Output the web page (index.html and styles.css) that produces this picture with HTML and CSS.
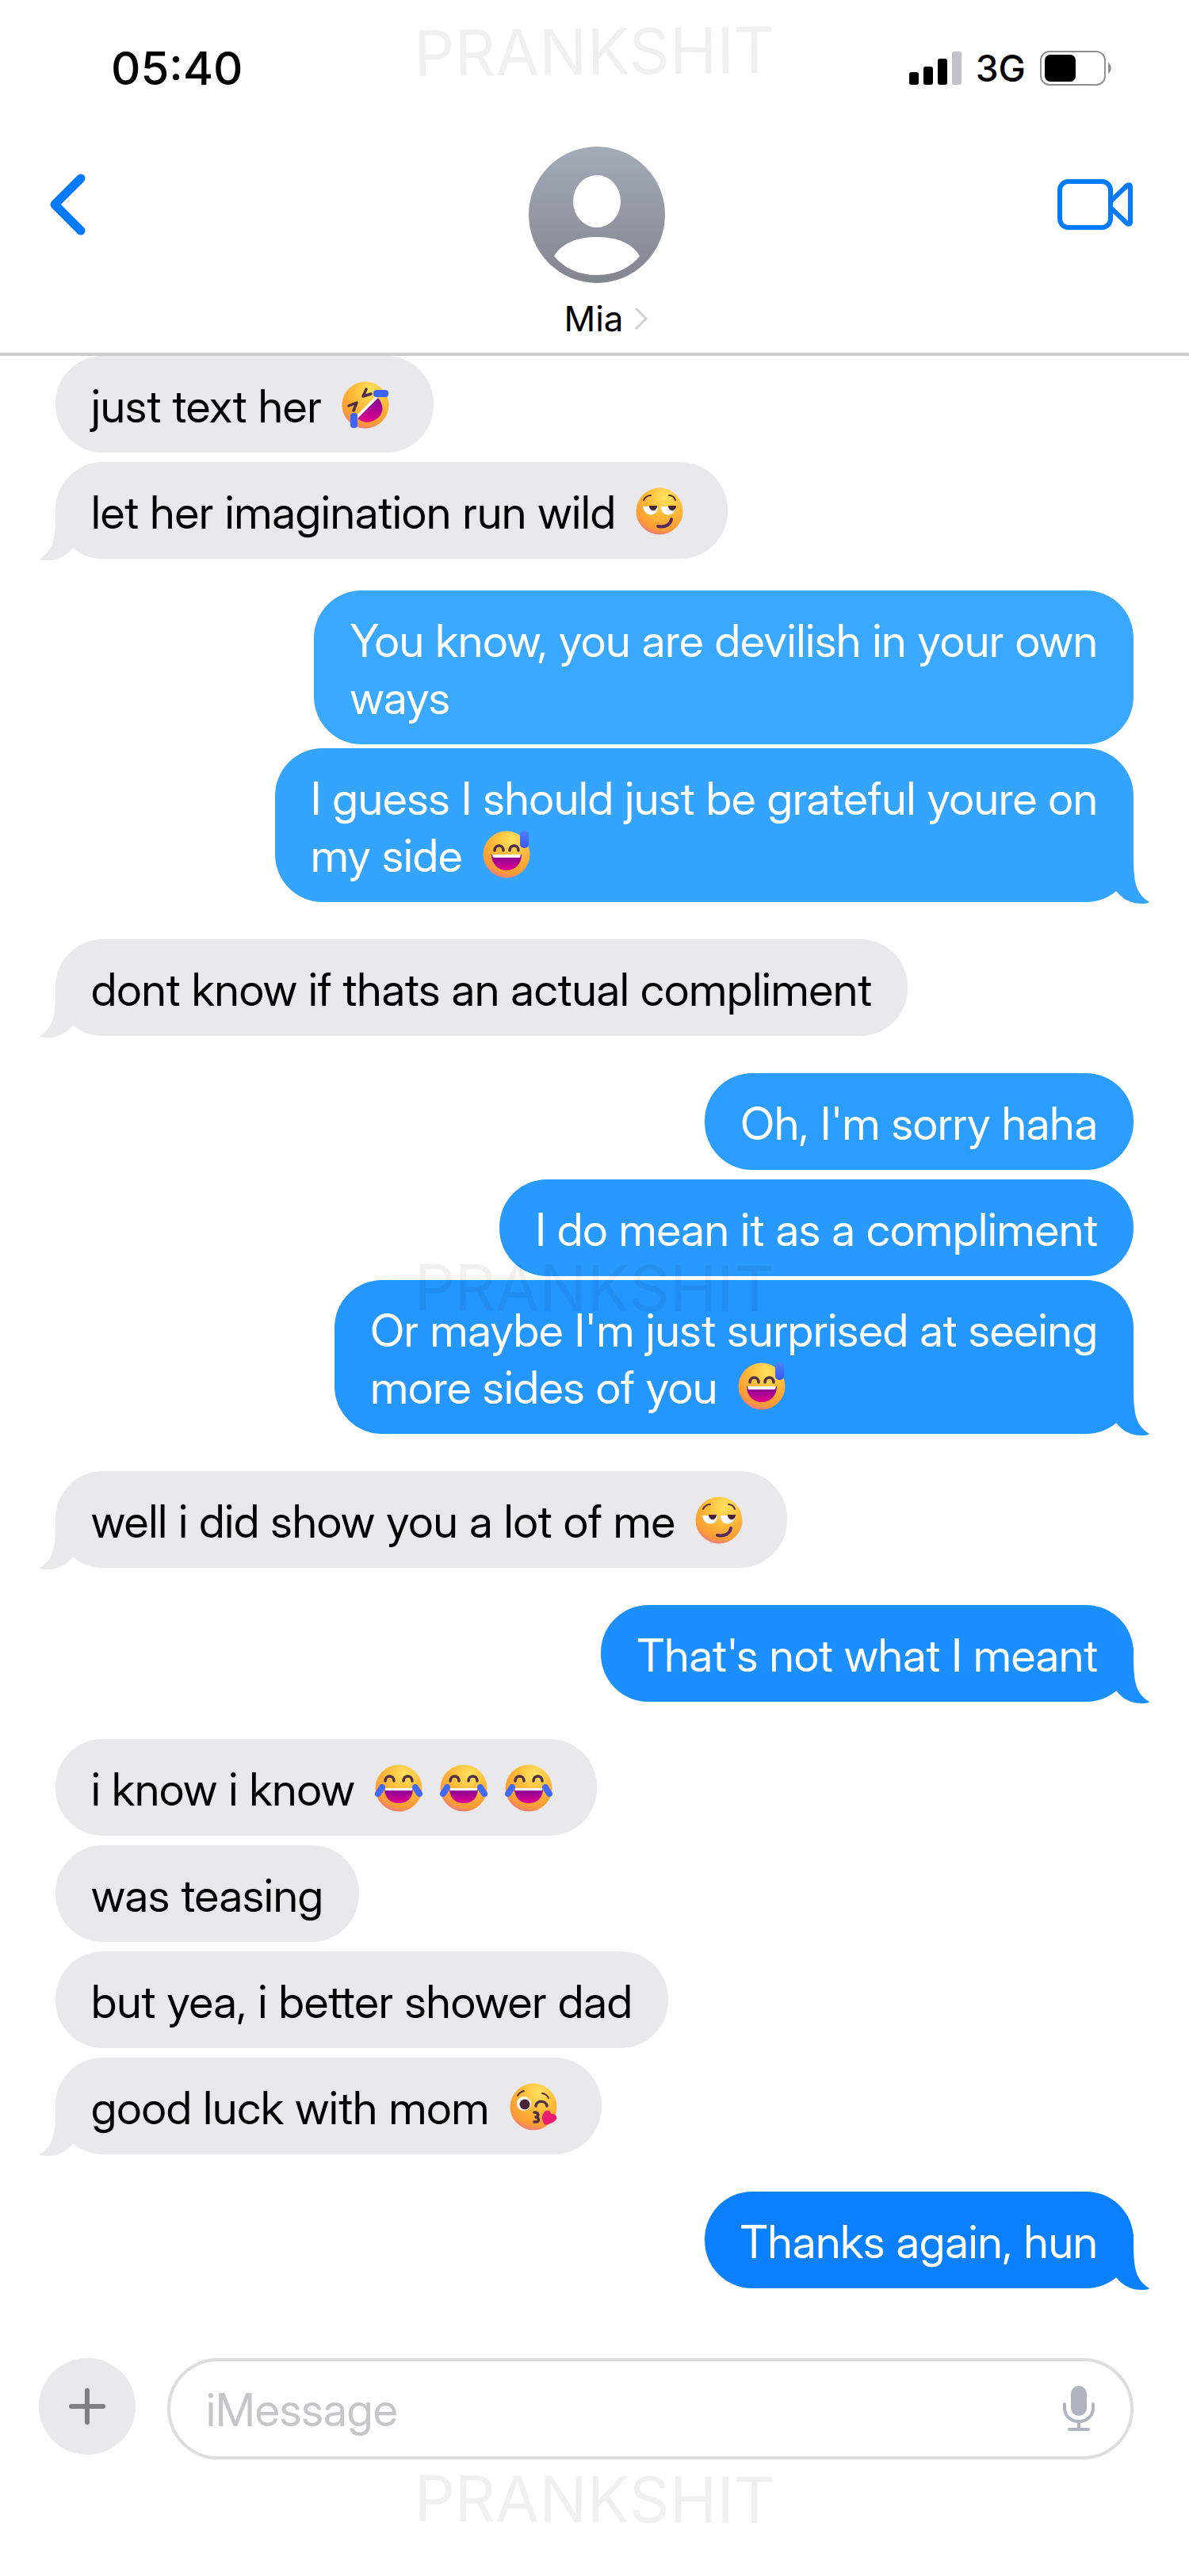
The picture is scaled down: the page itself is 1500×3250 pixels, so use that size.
FILE: index.html
```html
<!DOCTYPE html>
<html lang="en">
<head>
    <meta charset="UTF-8">
    <meta name="viewport" content="width=device-width, initial-scale=1.0">
    <title>Mia - Messages</title>
    <link rel="stylesheet" href="styles.css">
</head>
<body>
    <!-- Shared shapes -->
    <svg class="sprite" aria-hidden="true">
        <defs>
            <radialGradient id="face" cx="0.62" cy="0.2" r="0.9">
                <stop offset="0" stop-color="#ffe25e"/>
                <stop offset="0.45" stop-color="#ffb937"/>
                <stop offset="0.78" stop-color="#fb9b35"/>
                <stop offset="1" stop-color="#ea6aa0"/>
            </radialGradient>
            <linearGradient id="mouth" x1="0" y1="0" x2="0" y2="1">
                <stop offset="0.2" stop-color="#8f0095"/>
                <stop offset="1" stop-color="#e2058c"/>
            </linearGradient>
            <linearGradient id="tear" x1="0" y1="0" x2="0" y2="1">
                <stop offset="0" stop-color="#4d82ff"/>
                <stop offset="1" stop-color="#3a55f0"/>
            </linearGradient>
            <linearGradient id="avatar" x1="0" y1="0" x2="0" y2="1">
                <stop offset="0" stop-color="#a3abb9"/>
                <stop offset="1" stop-color="#83858f"/>
            </linearGradient>
        </defs>
        <symbol id="tail" viewBox="0 0 50 70">
            <path d="M30 0C30 38 30 56 50 68Q49 70 40 70C26 70 16 64 8 54L0 48V0Z" fill="currentColor"/>
        </symbol>
        <symbol id="sweat" viewBox="0 0 60 60">
            <circle cx="30" cy="30" r="29.5" fill="url(#face)"/>
            <path d="M15 25c0-8 11-8 11 0M34 25c0-8 11-8 11 0" fill="none" stroke="#4f2f45" stroke-width="3.5" stroke-linecap="round"/>
            <path d="M11 30h38c0 12-8 20-19 20S11 42 11 30z" fill="url(#mouth)"/>
            <path d="M12 30h36l-1 4H13z" fill="#fff"/>
            <rect x="47" y="0" width="11" height="22" rx="5" fill="url(#tear)"/>
        </symbol>
        <symbol id="joy" viewBox="0 0 60 60">
            <circle cx="30" cy="30" r="29.5" fill="url(#face)"/>
            <path d="M13 21c0-8 11-8 11 0M36 21c0-8 11-8 11 0" fill="none" stroke="#4f2f45" stroke-width="3.5" stroke-linecap="round"/>
            <path d="M12 30h36c0 12-7 19-18 19S12 42 12 30z" fill="url(#mouth)"/>
            <path d="M12 30h36l-1 3H13z" fill="#fff"/>
            <path d="M9 29 4 37M51 29l5 8" stroke="#4169fb" stroke-width="8" stroke-linecap="round"/>
        </symbol>
        <symbol id="rofl" viewBox="0 0 60 60">
            <circle cx="30" cy="30" r="29.5" fill="url(#face)"/>
            <path d="M31 10l-4 9 10-3M9 31l10-4-4 10" fill="none" stroke="#4f2f45" stroke-width="3.5" stroke-linecap="round" stroke-linejoin="round"/>
            <path d="M19 46 45 20c9 10 8 20 1 26s-18 9-27 0z" fill="url(#mouth)"/>
            <path d="M18 44 43 19l3 2-26 26z" fill="#fff"/>
            <rect x="40" y="11" width="19" height="9" rx="4" fill="#3d64ff"/>
            <rect x="11" y="40" width="9" height="19" rx="4" fill="#3d64ff"/>
        </symbol>
        <symbol id="smirk" viewBox="0 0 60 60">
            <circle cx="30" cy="30" r="29.5" fill="url(#face)"/>
            <path d="M10 16q3-6 9-6M42 10q6 0 8 6" fill="none" stroke="#4f2f45" stroke-width="2" stroke-linecap="round"/>
            <path d="M9 24h19c0 14-17 14-19 0zM32 24h19c-2 14-19 14-19 0z" fill="#fff"/>
            <path d="M17 23h10c0 8-10 8-10 0zM41 23h10c0 8-10 8-10 0z" fill="#4a2237"/>
            <path d="M28 49c10 2 16-3 17-9" fill="none" stroke="#552a5c" stroke-width="4" stroke-linecap="round"/>
        </symbol>
        <symbol id="kiss" viewBox="0 0 60 60">
            <circle cx="30" cy="30" r="29.5" fill="url(#face)"/>
            <path d="M10 16q3-5 8-6M41 13q6 1 8 6" fill="none" stroke="#4f2f45" stroke-width="2" stroke-linecap="round"/>
            <circle cx="18" cy="26" r="9" fill="#fff"/>
            <circle cx="19" cy="27" r="6.5" fill="#4a2237"/>
            <path d="M33 29c1-8 13-7 14 0" fill="none" stroke="#4f2f45" stroke-width="3.5" stroke-linecap="round"/>
            <path d="M31 37c6 0 6 5 2 6 5 1 5 7-2 6" fill="none" stroke="#4f2f45" stroke-width="3.5" stroke-linecap="round" stroke-linejoin="round"/>
            <path d="M43 38c2-5 9-4 9 1 8-1 9 6 5 9s-8 4-12 5c-5-5-5-11-2-15z" fill="#ea1d70"/>
        </symbol>
    </svg>

    <header class="header">
        <div class="status-bar">
            <time class="clock">05:40</time>
            <div class="indicators">
                <svg class="signal" viewBox="0 0 66 44" aria-hidden="true">
                    <rect x="0" y="27" width="12" height="16" rx="3"/>
                    <rect x="18" y="20" width="12" height="23" rx="3"/>
                    <rect x="36" y="10" width="12" height="33" rx="3"/>
                    <rect x="54" y="1" width="12" height="42" rx="3" fill="#c3c2c8"/>
                </svg>
                <span class="network">3G</span>
                <svg class="battery" viewBox="0 0 90 44" aria-hidden="true">
                    <rect x="1" y="1" width="81" height="42" rx="11" fill="none" stroke="#909090" stroke-width="2"/>
                    <rect x="6" y="5" width="39" height="34" rx="7"/>
                    <path d="M86 15c5 3 5 11 0 14z" fill="#909090"/>
                </svg>
            </div>
        </div>

        <nav class="nav">
            <button class="nav-button" type="button" aria-label="Back">
                <svg width="46" height="78" viewBox="0 0 46 78" fill="none" stroke="#007aff" stroke-width="11" stroke-linecap="round" stroke-linejoin="round">
                    <path d="M40 6 7 39l33 33"/>
                </svg>
            </button>
            <div class="contact">
                <svg class="avatar" viewBox="0 0 172 172" aria-hidden="true">
                    <circle cx="86" cy="86" r="86" fill="url(#avatar)"/>
                    <ellipse cx="86" cy="69" rx="30" ry="33" fill="#fff"/>
                    <path d="M32 138C42 121 63 114 86 114s44 7 54 24c-13 16-32 24-54 24s-41-8-54-24z" fill="#fff"/>
                </svg>
                <a class="name" href="#">Mia
                    <svg width="16" height="28" viewBox="0 0 16 28" fill="none" stroke="#d0d0d2" stroke-width="3">
                        <path d="M1 1 14 14 1 27"/>
                    </svg>
                </a>
            </div>
            <button class="nav-button video" type="button" aria-label="Video call">
                <svg width="96" height="66" viewBox="0 0 96 66" fill="none" stroke="#007aff" stroke-width="6" stroke-linejoin="round">
                    <rect x="3" y="4" width="64" height="58" rx="11"/>
                    <path d="M68 28 88 9Q92 7 92 11V55Q92 59 88 57L68 38"/>
                </svg>
            </button>
        </nav>
    </header>

    <main class="chat">
        <p class="bubble received">just text her <svg class="emoji" role="img" aria-label="rolling on the floor laughing"><use href="#rofl"/></svg></p>
        <p class="bubble received last">let her imagination run wild <svg class="emoji" role="img" aria-label="smirk"><use href="#smirk"/></svg><svg class="tail"><use href="#tail"/></svg></p>

        <p class="bubble sent tall blue-1">You know, you are devilish in your own<br>ways</p>
        <p class="bubble sent tall blue-2 last">I guess I should just be grateful youre on<br>my side <svg class="emoji" role="img" aria-label="sweat smile"><use href="#sweat"/></svg><svg class="tail"><use href="#tail"/></svg></p>

        <p class="bubble received last">dont know if thats an actual compliment<svg class="tail"><use href="#tail"/></svg></p>

        <p class="bubble sent blue-3">Oh, I'm sorry haha</p>
        <p class="bubble sent blue-4">I do mean it as a compliment</p>
        <p class="bubble sent tall blue-5 last">Or maybe I'm just surprised at seeing<br>more sides of you <svg class="emoji" role="img" aria-label="sweat smile"><use href="#sweat"/></svg><svg class="tail"><use href="#tail"/></svg></p>

        <p class="bubble received last">well i did show you a lot of me <svg class="emoji" role="img" aria-label="smirk"><use href="#smirk"/></svg><svg class="tail"><use href="#tail"/></svg></p>

        <p class="bubble sent blue-6 last">That's not what I meant<svg class="tail"><use href="#tail"/></svg></p>

        <p class="bubble received">i know i know <svg class="emoji" role="img" aria-label="joy"><use href="#joy"/></svg><svg class="emoji" role="img" aria-label="joy"><use href="#joy"/></svg><svg class="emoji" role="img" aria-label="joy"><use href="#joy"/></svg></p>
        <p class="bubble received">was teasing</p>
        <p class="bubble received">but yea, i better shower dad</p>
        <p class="bubble received last">good luck with mom <svg class="emoji" role="img" aria-label="kiss"><use href="#kiss"/></svg><svg class="tail"><use href="#tail"/></svg></p>

        <p class="bubble sent blue-7 last">Thanks again, hun<svg class="tail"><use href="#tail"/></svg></p>
    </main>

    <form class="composer">
        <button class="add" type="button" aria-label="Add attachment">
            <svg width="48" height="48" viewBox="0 0 48 48" stroke="#7e7f82" stroke-width="6" stroke-linecap="round">
                <path d="M24 4v40M4 24h40"/>
            </svg>
        </button>
        <div class="field">
            <input type="text" placeholder="iMessage" aria-label="iMessage">
            <button class="mic" type="button" aria-label="Dictate">
                <svg width="40" height="58" viewBox="0 0 40 58" fill="none" stroke="#b0b4be" stroke-width="4" stroke-linecap="round">
                    <rect x="10" y="0" width="20" height="38" rx="10" fill="#b0b4be" stroke="none"/>
                    <path d="M2 23v5c0 10 8 17 18 17s18-7 18-17v-5M20 45v9M8 55h24"/>
                </svg>
            </button>
        </div>
    </form>

    <div class="watermark top">PRANKSHIT</div>
    <div class="watermark middle">PRANKSHIT</div>
    <div class="watermark bottom">PRANKSHIT</div>
</body>
</html>
```
FILE: styles.css
```css
* {
    box-sizing: border-box;
}

body {
    position: relative;
    margin: 0;
    background: #fff;
    color: #000;
    font-family: Inter, "Liberation Sans", sans-serif;
}

button {
    padding: 0;
    border: none;
    background: none;
}

svg {
    display: block;
}

.sprite {
    position: absolute;
    width: 0;
    height: 0;
}

/* Header */
.header {
    padding: 50px 70px 15px;
    border-bottom: 4px solid #ccc;
}

.status-bar {
    display: flex;
    justify-content: space-between;
    align-items: center;
    height: 72px;
    padding: 0 28px 0 70px;
}

.clock {
    font-size: 58px;
    font-weight: 500;
}

.indicators {
    display: flex;
    align-items: center;
    gap: 18px;
}

.signal {
    width: 66px;
    height: 44px;
}

.network {
    font-size: 46px;
    font-weight: 500;
}

.battery {
    width: 90px;
    height: 44px;
}

.nav {
    display: grid;
    grid-template-columns: 1fr auto 1fr;
    align-items: start;
    padding-top: 63px;
}

.nav-button {
    display: flex;
    align-items: center;
    justify-self: start;
    height: 146px;
    margin-left: -8px;
}

.nav-button.video {
    justify-self: end;
    margin: 0;
}

.contact {
    display: flex;
    flex-direction: column;
    align-items: center;
    gap: 17px;
    padding-left: 6px;
}

.avatar {
    width: 172px;
    height: 172px;
}

.name {
    display: flex;
    align-items: center;
    gap: 14px;
    padding-left: 22px;
    font-size: 44px;
    line-height: 56px;
    color: #000;
    text-decoration: none;
}

/* Messages */
.chat {
    display: flex;
    flex-direction: column;
    align-items: flex-start;
    gap: 12px;
    padding: 0 70px;
}

.bubble {
    position: relative;
    margin: 0;
    padding: 28px 45px 22px;
    border-radius: 60px;
    font-family: "Inter Display", Inter, "Liberation Sans", sans-serif;
    font-size: 57px;
    line-height: 72px;
}

.received {
    background: #e9e9eb;
}

.sent {
    align-self: flex-end;
    color: #fff;
}

.tall {
    margin-top: -7px;
}

.last:not(:last-child) {
    margin-bottom: 35px;
}

.blue-1 { background: #3ba8ff; }
.blue-2 { background: #35a4ff; }
.blue-3 { background: #2b9dff; }
.blue-4 { background: #289aff; }
.blue-5 { background: #2496ff; }
.blue-6 { background: #1b8fff; }
.blue-7 { background: #0a80ff; }

.blue-2 .tail { color: #35a4ff; }
.blue-5 .tail { color: #2496ff; }
.blue-6 .tail { color: #1b8fff; }
.blue-7 .tail { color: #0a80ff; }

.tail {
    position: absolute;
    right: -20px;
    bottom: -2px;
    width: 50px;
    height: 70px;
}

.received .tail {
    right: auto;
    left: -20px;
    color: #e9e9eb;
    transform: scaleX(-1);
}

.emoji {
    display: inline-block;
    width: 60px;
    height: 60px;
    margin: 0 11px;
    vertical-align: -8px;
}

/* Composer */
.composer {
    display: flex;
    align-items: flex-start;
    gap: 40px;
    padding: 88px 70px 147px 49px;
}

.add {
    display: flex;
    flex: none;
    align-items: center;
    justify-content: center;
    width: 122px;
    height: 122px;
    border-radius: 50%;
    background: #e8e9eb;
}

.field {
    display: flex;
    flex: 1;
    align-items: center;
    height: 128px;
    padding: 0 45px;
    border: 4px solid #dcdddd;
    border-radius: 64px;
}

.field input {
    flex: 1;
    min-width: 0;
    padding: 2px 0 0;
    border: none;
    outline: none;
    background: none;
    font-family: "Inter Display", Inter, "Liberation Sans", sans-serif;
    font-size: 58px;
}

.field input::placeholder {
    color: #c5c6c8;
    opacity: 1;
}

/* Watermark */
.watermark {
    position: absolute;
    left: 50%;
    color: rgba(0, 0, 0, 0.06);
    font-size: 80px;
    line-height: 80px;
    transform: translate(-50%, -50%);
    pointer-events: none;
}

.top {
    top: 2%;
    transform: translate(-50%, -50%) rotate(-0.6deg);
}

.middle,
.bottom {
    top: 50%;
    transform: translate(-50%, -50%) rotate(0.3deg);
}

.bottom {
    top: 97%;
}
```
